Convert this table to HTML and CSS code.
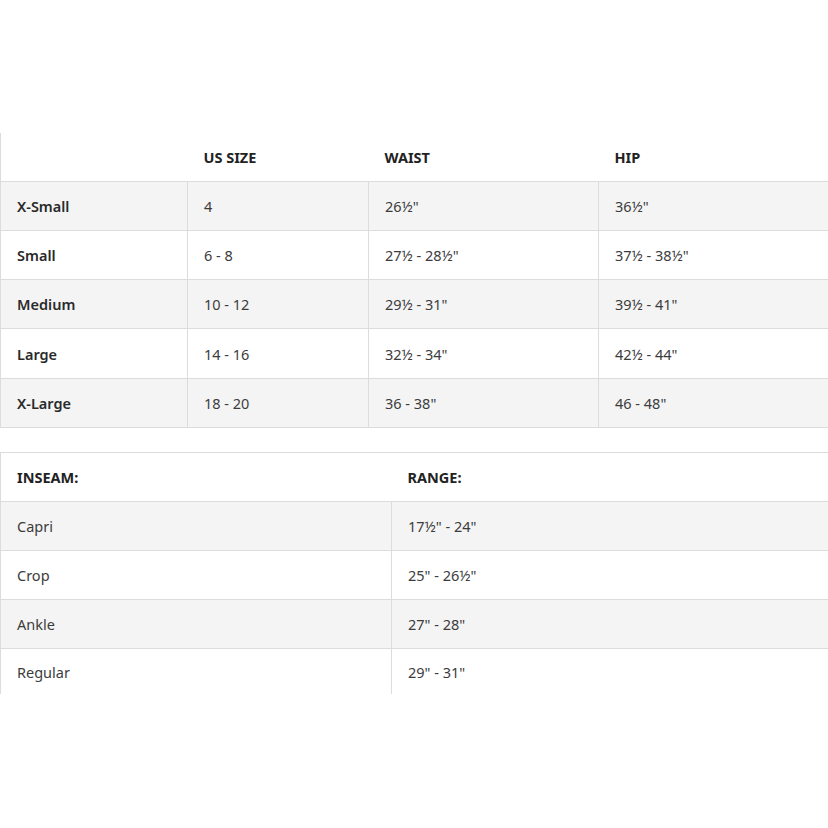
FILE: index.html
```html
<!DOCTYPE html>
<html>
<head>
<meta charset="utf-8">
<link rel="stylesheet" href="styles.css">
</head>
<body>
<div class="page">
  <table class="chart sizes">
    <colgroup><col class="c1"><col class="c2"><col class="c3"><col class="c4"></colgroup>
    <thead>
      <tr><th></th><th>US SIZE</th><th>WAIST</th><th>HIP</th></tr>
    </thead>
    <tbody>
      <tr class="alt"><td class="name">X-Small</td><td>4</td><td>26½"</td><td>36½"</td></tr>
      <tr><td class="name">Small</td><td>6 - 8</td><td>27½ - 28½"</td><td>37½ - 38½"</td></tr>
      <tr class="alt"><td class="name">Medium</td><td>10 - 12</td><td>29½ - 31"</td><td>39½ - 41"</td></tr>
      <tr class="tall"><td class="name">Large</td><td>14 - 16</td><td>32½ - 34"</td><td>42½ - 44"</td></tr>
      <tr class="alt"><td class="name">X-Large</td><td>18 - 20</td><td>36 - 38"</td><td>46 - 48"</td></tr>
    </tbody>
  </table>

  <table class="chart inseam">
    <colgroup><col class="i1"><col class="i2"></colgroup>
    <thead>
      <tr><th>INSEAM:</th><th>RANGE:</th></tr>
    </thead>
    <tbody>
      <tr class="alt"><td>Capri</td><td>17½" - 24"</td></tr>
      <tr><td>Crop</td><td>25" - 26½"</td></tr>
      <tr class="alt"><td>Ankle</td><td>27" - 28"</td></tr>
      <tr class="cut"><td>Regular</td><td>29" - 31"</td></tr>
    </tbody>
  </table>
</div>
</body>
</html>
```

FILE: styles.css
```css
html, body {
  margin: 0;
  padding: 0;
  background: #ffffff;
}

.page {
  width: 828px;
  height: 828px;
  overflow: hidden;
  padding-top: 133px;
  box-sizing: border-box;
  font-family: "Noto Sans", "Open Sans", sans-serif;
  font-size: 14.5px;
  color: #3c3c3c;
}

.chart {
  border-collapse: collapse;
  table-layout: fixed;
  width: 829px;
  border-left: 1px solid #dcdcdc;
}

.chart th,
.chart td {
  text-align: left;
  padding: 0 0 0 16px;
  vertical-align: middle;
  border-bottom: 1px solid #dcdcdc;
}

.chart th {
  font-weight: 700;
  color: #222;
  height: 48px;
}

.chart td {
  height: 48px;
  border-left: 1px solid #dcdcdc;
}

.chart tr.tall td {
  height: 49px;
}

.chart td:first-child {
  border-left: none;
}

.chart tr.alt td {
  background: #f4f4f4;
}

.sizes .c1 { width: 187px; }
.sizes .c2 { width: 181px; }
.sizes .c3 { width: 230px; }
.sizes .c4 { width: 231px; }

.chart td.name {
  font-weight: 600;
  color: #2a2a2a;
}

.inseam {
  margin-top: 24px;
  border-top: 1px solid #dcdcdc;
}

.inseam th {
  height: 48px;
}

.inseam .i1 { width: 391px; }
.inseam .i2 { width: 438px; }

.inseam tr.cut td {
  border-bottom: none;
  height: 45px;
}
```
